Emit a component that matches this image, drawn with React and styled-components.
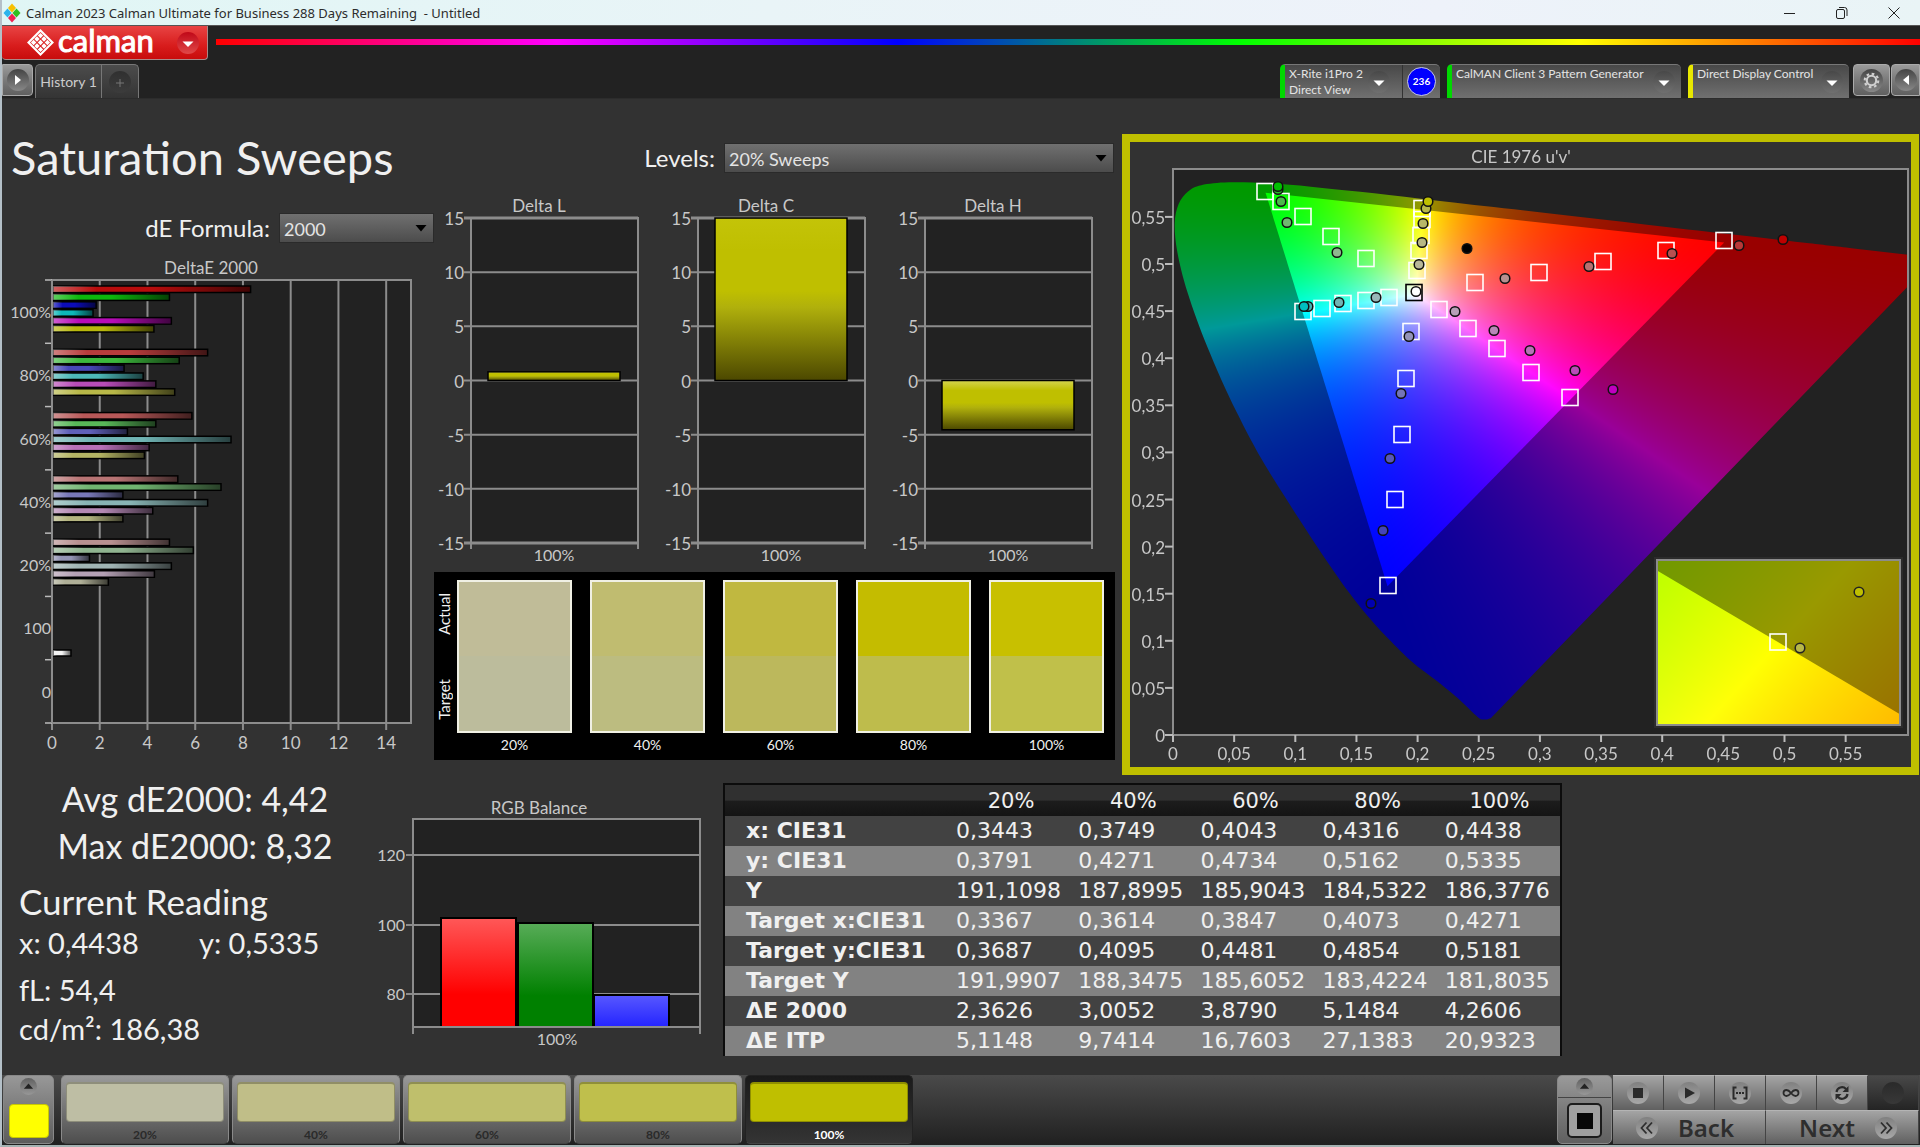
import React, { useEffect, useRef } from "react";
import styled, { createGlobalStyle, css } from "styled-components";

const UI = `Lato, "Open Sans", sans-serif`;
const SYSTEM = `"Noto Sans", "Open Sans", sans-serif`;

const GlobalStyle = createGlobalStyle`
  *, *::before, *::after { box-sizing: border-box; }
  body { margin: 0; background: #323232; font-family: ${UI}; color: #f0f0f0; }
  button, select { font-family: inherit; margin: 0; }
  h1, h2, p { margin: 0; font-weight: 400; }
  svg text { font-family: ${UI}; fill: #c8c8c8; }
`;

/* ---------- window frame ---------- */

const Shell = styled.div`
  min-height: 100vh;
  display: flex;
  flex-direction: column;
  border-left: 2px solid #b4c0c8;
  border-bottom: 2px solid #a4b2b2;
`;

const TitleBar = styled.div`
  height: 25px;
  display: flex;
  align-items: center;
  gap: 5px;
  padding-left: 1px;
  background: linear-gradient(90deg, #e0f6f5 0%, #e9f4f7 40%, #eef2fa 75%, #e9f4f6 100%);
  color: #2c2c2c;
  font: 13px/20px ${SYSTEM};
  white-space: pre;
`;

const WindowButtons = styled.div`
  margin-left: auto;
  display: flex;
`;

const WindowButton = styled.button`
  width: 52px;
  height: 25px;
  border: 0;
  padding: 0;
  background: none;
  display: grid;
  place-items: center;
`;

/* ---------- header ---------- */

const Header = styled.header`
  height: 74px;
  background: #222;
  border-top: 1px solid #555;
  border-bottom: 1px solid #2c2c2c;
  display: flex;
  flex-direction: column;
  justify-content: space-between;
`;

const BrandRow = styled.div`
  display: flex;
  align-items: flex-start;
  gap: 8px;
`;

const BrandButton = styled.button`
  width: 206px;
  height: 34px;
  padding: 0 8px 0 25px;
  display: flex;
  align-items: center;
  gap: 4px;
  border: 0;
  border-right: 1px solid #a88;
  border-bottom: 1px solid #a88;
  border-radius: 0 0 4px 4px;
  background: linear-gradient(#e84444, #d81c1c 60%, #c80c0c);
  color: #fff;
  font-size: 31px;
  svg:last-child { margin-left: auto; }
`;

const BrandName = styled.span`
  height: 34px;
  line-height: 28px;
  -webkit-text-stroke: 1px #fff;
`;

const Rainbow = styled.div`
  flex: 1;
  height: 6px;
  margin-top: 13px;
  background: linear-gradient(90deg, #f00, #f0f, #00f, #0f0, #ff0, #f00);
`;

const TabRow = styled.div`
  display: flex;
  align-items: flex-start;
  height: 34px;
`;

const metal = css`
  background: linear-gradient(#9a9a9a, #7a7a7a 50%, #606060);
  border: 1px solid #aaa;
`;

const EdgeButton = styled.button`
  ${metal}
  width: ${(p) => p.$w}px;
  height: 32px;
  padding: 0;
  display: grid;
  place-items: center;
  border-radius: ${(p) => p.$radius || "4px"};
`;

const HistoryTabs = styled.div`
  display: flex;
  margin-left: 2px;
  height: 34px;
  border: 1px solid #777;
  border-bottom: 0;
  border-radius: 5px 5px 0 0;
  background: linear-gradient(#4c4c4c, #343434);
`;

const Tab = styled.button`
  width: ${(p) => p.$w}px;
  padding: 0;
  border: 0;
  border-left: ${(p) => (p.$divided ? "1px solid #777" : "0")};
  background: none;
  color: #ccc;
  font-size: 14px;
  display: grid;
  place-items: center;
`;

const Devices = styled.div`
  margin-left: auto;
  display: flex;
  gap: 7px;
`;

const Device = styled.div`
  width: ${(p) => p.$w}px;
  height: 34px;
  display: flex;
  overflow: hidden;
  border-radius: 5px 5px 0 0;
  border-top: 1px solid #777;
  border-left: 5px solid ${(p) => p.$accent};
  background: linear-gradient(#484848, #707070);
`;

const DeviceMenu = styled.button`
  flex: 1;
  display: flex;
  justify-content: space-between;
  align-items: flex-start;
  padding: 1px ${(p) => p.$right || 6}px 0 4px;
  border: 0;
  background: none;
  color: #e4e4e4;
  font-size: 12px;
  line-height: 16px;
  text-align: left;
  white-space: nowrap;
  svg { margin-top: 5px; flex: none; }
`;

const Counter = styled.div`
  width: 38px;
  border-left: 1px solid #333;
  display: grid;
  place-items: center;
  span {
    width: 29px;
    height: 29px;
    border-radius: 50%;
    border: 1px solid #ccd;
    background: #00f;
    color: #fff;
    font: bold 10px/27px ${UI};
    text-align: center;
  }
`;

const EdgeGroup = styled.div`
  display: flex;
  margin-left: 4px;
  gap: 1px;
`;

/* ---------- main panes ---------- */

const Main = styled.main`
  flex: 1;
  background: #323232;
`;

const UpperRow = styled.div`
  display: grid;
  grid-template-columns: minmax(0, 432fr) minmax(0, 688fr) minmax(0, 798fr);
`;

const LowerRow = styled.div`
  display: grid;
  grid-template-columns: minmax(0, 368fr) minmax(0, 353fr) minmax(0, 839fr) minmax(0, 358fr);
`;

const Column = styled.section`
  display: flex;
  flex-direction: column;
  padding-top: ${(p) => p.$top || 0}px;
  padding-right: ${(p) => p.$right || 0}px;
`;

const PageTitle = styled.h1`
  padding-left: 9px;
  font-size: 47px;
  line-height: 56px;
`;

const Field = styled.label`
  display: flex;
  justify-content: flex-end;
  align-items: center;
  gap: 9px;
  margin: ${(p) => p.$margin};
  font-size: 24px;
  line-height: 30px;
  white-space: nowrap;
`;

const SelectBox = styled.span`
  display: grid;
  width: ${(p) => p.$w};
  select, svg { grid-area: 1 / 1; }
  select {
    appearance: none;
    height: 30px;
    width: 100%;
    padding: 2px 4px 0;
    border: 1px solid #2a2a2a;
    border-radius: 0;
    background: linear-gradient(#707070, #4c4c4c);
    color: #e4e4e4;
    font-size: 18px;
  }
  svg { place-self: center end; margin-right: 7px; pointer-events: none; }
`;

const Chart = styled.svg`
  display: block;
  width: 100%;
  height: auto;
`;

const DeltaRow = styled.div`
  display: grid;
  grid-template-columns: repeat(3, minmax(0, 1fr));
  margin: 23px 0 6px;
`;

const SwatchPanel = styled.div`
  display: grid;
  grid-template-columns: 23px minmax(0, 1fr);
  height: 188px;
  padding: 8px 11px 0 0;
  background: #000;
`;

const SwatchSides = styled.div`
  display: grid;
  grid-template-rows: 68px 102px;
  justify-items: start;
  align-items: center;
  font-size: 15px;
  line-height: 20px;
  span { writing-mode: vertical-rl; transform: rotate(180deg); }
`;

const Swatches = styled.div`
  display: grid;
  grid-template-columns: repeat(5, minmax(0, 1fr));
  column-gap: 18px;
`;

const Swatch = styled.figure`
  margin: 0;
  text-align: center;
  font-size: 14px;
  line-height: 24px;
`;

const SwatchColor = styled.div`
  height: 153px;
  border: 2px solid #f0f0e4;
  background: linear-gradient(${(p) => p.$actual} 50%, ${(p) => p.$target} 50%);
`;

const CiePanel = styled.section`
  margin: 35px 1px 0 0;
  border: 8px solid #bfbf00;
  display: grid;
  > * { grid-area: 1 / 1; width: 100%; height: auto; display: block; }
`;

/* ---------- readings ---------- */

const Averages = styled.div`
  padding: 0 0 0 18px;
  text-align: center;
  font-size: 34px;
  line-height: 47px;
`;

const ReadingTitle = styled.h2`
  padding-left: 17px;
  margin-top: 10px;
  font-size: 35px;
  line-height: 44px;
`;

const ReadingLine = styled.p`
  display: flex;
  padding-left: 17px;
  margin-top: ${(p) => p.$gap || 0}px;
  font-size: 29px;
  line-height: 39px;
  span { min-width: 180px; }
`;

const TablePane = styled.div`
  padding-top: 8px;
`;

const Results = styled.table`
  width: 100%;
  table-layout: fixed;
  border-collapse: collapse;
  border: 2px solid #0c0c0c;
  border-bottom: 0;
  font-family: "DejaVu Sans", sans-serif;
  font-size: 22px;
  color: #f0f0f0;
  th, td { padding: 0; height: 30px; line-height: 28px; white-space: nowrap; }
  td { padding-left: 6px; }
  thead th { height: 32px; font-weight: 400; font-size: 21px; }
  thead tr { background: linear-gradient(#303030 50%, #1c1c1c 54%, #141414); }
  tbody th { padding-left: 21px; text-align: left; }
  tbody tr { background: #424242; }
  tbody tr:nth-child(even) { background: #828282; }
`;

/* ---------- bottom bar ---------- */

const BottomBar = styled.footer`
  display: flex;
  height: 70px;
  padding: 0 1px 1px 1px;
  background: linear-gradient(#4a4a4a, #202020);
`;

const ColorMenu = styled.button`
  ${metal}
  background: linear-gradient(#989898, #5c5c5c);
  border-color: #888;
  width: 51px;
  padding: 2px 0 5px;
  margin-right: 7px;
  border-radius: 5px;
  display: flex;
  flex-direction: column;
  justify-content: space-between;
  align-items: center;
`;

const CurrentColor = styled.span`
  width: 40px;
  height: 34px;
  border-radius: 4px;
  border: 1px solid #c8c800;
  background: #ff0;
`;

const Steps = styled.div`
  display: flex;
  gap: 3px;
`;

const Step = styled.button`
  width: 168px;
  padding: 6px 4px 0;
  border: 1px solid ${(p) => (p.$on ? "#222" : "#8a8a8a")};
  border-bottom-color: #444;
  border-radius: 5px;
  background: ${(p) => (p.$on ? "linear-gradient(#1a1a1a, #343434)" : "linear-gradient(#999, #4e4e4e)")};
  color: ${(p) => (p.$on ? "#fff" : "#2a2a2a")};
  font-size: 12px;
  font-weight: 700;
  line-height: 26px;
  span {
    display: block;
    height: 40px;
    border-radius: 4px;
    border: 1px solid rgba(0, 0, 0, 0.25);
    border-top-width: 2px;
    background: ${(p) => p.$color};
  }
`;

const Transport = styled.div`
  margin-left: auto;
  display: flex;
  gap: 1px;
`;

const PatternBox = styled.div`
  ${metal}
  border-color: #888;
  width: 55px;
  border-radius: 5px;
  overflow: hidden;
  display: grid;
  grid-template-rows: 21px 1fr;
`;

const PlainButton = styled.button`
  border: 0;
  border-top: ${(p) => (p.$line ? "1px solid #444" : "0")};
  padding: 0;
  background: none;
  display: grid;
  place-items: center;
`;

const PatternIcon = styled.span`
  width: 35px;
  height: 35px;
  border: 2px solid #1c1c1c;
  border-radius: 5px;
  background: #a0a0a0;
  display: grid;
  place-items: center;
  &::after { content: ""; width: 16px; height: 16px; background: #080808; }
`;

const Keys = styled.div`
  display: grid;
  grid-template-columns: repeat(6, 51px);
  grid-template-rows: 35px 34px;
`;

const Key = styled.button`
  grid-column: span ${(p) => p.$span || 1};
  padding: ${(p) => p.$pad || "0"};
  border: 0;
  border-top: 1px solid ${(p) => (p.$off ? "#444" : "#b4b4b4")};
  border-right: 1px solid #444;
  background: ${(p) => (p.$off ? "linear-gradient(#484848, #242424)" : "linear-gradient(#a4a4a4, #606060)")};
  color: #2e2e2e;
  font-family: ${SYSTEM};
  font-size: 24px;
  font-weight: 600;
  line-height: 30px;
  display: flex;
  align-items: center;
  justify-content: center;
  gap: 20px;
`;

/* ---------- icons ---------- */

const AppIcon = () => (
  <svg width="18" height="20" viewBox="0 0 18 20" aria-hidden="true">
    <path d="M9 0.500 13 5 9 9.500 5 5Z" fill="#f7c000" />
    <path d="M4.500 5.500 8.500 10 4.500 14.500 0.500 10Z" fill="#2cb4ec" />
    <path d="M13.500 5.500 17.500 10 13.500 14.500 9.500 10Z" fill="#30c020" />
    <path d="M9 10.500 13 15 9 19.500 5 15Z" fill="#f02050" />
  </svg>
);

const BrandMark = () => (
  <svg width="27" height="27" viewBox="0 0 27 27" fill="#fff" aria-hidden="true">
    <path d="M13.500 0 27 13.500 13.500 27 0 13.500Z M13.500 3 3 13.500 13.500 24 24 13.500Z" fillRule="evenodd" />
    {[[13.5, 6.6], [10, 10], [17, 10], [6.6, 13.5], [13.5, 13.5], [20.4, 13.5], [10, 17], [17, 17], [13.5, 20.4]].map(
      ([x, y]) => (
        <path key={`${x}-${y}`} d={`M${x} ${y - 2.7}l2.700 2.700-2.700 2.700-2.700-2.700Z`} />
      )
    )}
  </svg>
);

const Round = ({ children, size = 22, from = "#444", to = "#888" }) => {
  const id = `g${from.slice(1)}${to.slice(1)}`;
  return (
    <svg width={size} height={size} viewBox="0 0 22 22" aria-hidden="true">
      <defs>
        <linearGradient id={id} x2="0" y2="1">
          <stop stopColor={from} />
          <stop offset="1" stopColor={to} />
        </linearGradient>
      </defs>
      <circle cx="11" cy="11" r="11" fill={`url(#${id})`} />
      {children}
    </svg>
  );
};

const Caret = () => (
  <svg width="12" height="8" viewBox="0 0 12 8" aria-hidden="true">
    <path d="M0.500 1h11L6 7.500Z" fill="#000" />
  </svg>
);

const DownArrow = ({ from, to }) => (
  <Round from={from} to={to}>
    <path d="M5.500 9.500h11L11 15Z" fill="#fff" />
  </Round>
);

const Gear = () => (
  <Round size={23}>
    <circle cx="11" cy="11" r="4.500" fill="none" stroke="#d0d0d0" strokeWidth="2" />
    <circle cx="11" cy="11" r="6.500" fill="none" stroke="#d0d0d0" strokeWidth="2" strokeDasharray="2.550 2.550" />
  </Round>
);

/* ---------- data ---------- */

const BAR_GROUPS = [
  ["100%", [8.32, 4.92, 1.85, 1.72, 5.0, 4.27], ["#b80c0c", "#0cb80c", "#0c0cb8", "#0cb8b8", "#b80cb8", "#b8b80c"]],
  ["80%", [6.52, 5.33, 3.02, 3.82, 4.35, 5.14], ["#b83c3c", "#3cb83c", "#4848b8", "#4cb8b8", "#b84cb8", "#b8b848"]],
  ["60%", [5.86, 4.35, 3.16, 7.5, 4.07, 3.87], ["#b85858", "#58b858", "#6060b8", "#70b4b4", "#b870b8", "#b4b464"]],
  ["40%", [5.27, 7.08, 2.97, 6.52, 4.22, 2.97], ["#b87474", "#70b470", "#7878b8", "#88b4b4", "#b488b4", "#b4b480"]],
  ["20%", [4.92, 5.92, 1.57, 5.0, 4.29, 2.36], ["#b89090", "#90b490", "#9494b4", "#a0b4b4", "#b4a0b4", "#b0b098"]],
  ["100", [], []],
  ["0", [], []],
];

const SWATCHES = [
  ["20%", "#c0bc98", "#bcbc9c", "#bebea4"],
  ["40%", "#c0bc70", "#bcbc80", "#c0be88"],
  ["60%", "#c0b840", "#bcb85c", "#bfbf6c"],
  ["80%", "#c4bc00", "#bebc4c", "#bfbf4c"],
  ["100%", "#c8c000", "#c0c04a", "#bfbf00"],
];

const TABLE = [
  ["x: CIE31", "0,3443", "0,3749", "0,4043", "0,4316", "0,4438"],
  ["y: CIE31", "0,3791", "0,4271", "0,4734", "0,5162", "0,5335"],
  ["Y", "191,1098", "187,8995", "185,9043", "184,5322", "186,3776"],
  ["Target x:CIE31", "0,3367", "0,3614", "0,3847", "0,4073", "0,4271"],
  ["Target y:CIE31", "0,3687", "0,4095", "0,4481", "0,4854", "0,5181"],
  ["Target Y", "191,9907", "188,3475", "185,6052", "183,4224", "181,8035"],
  ["ΔE 2000", "2,3626", "3,0052", "3,8790", "5,1484", "4,2606"],
  ["ΔE ITP", "5,1148", "9,7414", "16,7603", "27,1383", "20,9323"],
];

/* ---------- charts ---------- */

const AXIS = "#8c8c8c";

const DeltaEChart = () => {
  const left = 50, right = 409, top = 25, bottom = 468;
  const x = (v) => left + v * 23.87;
  const band = (bottom - top) / 7;
  return (
    <Chart viewBox="0 0 432 510" role="img" aria-label="DeltaE 2000">
      <defs>
        <linearGradient id="sheen">
          <stop stopColor="#fff" stopOpacity="0.35" />
          <stop offset="0.22" stopColor="#fff" stopOpacity="0" />
          <stop offset="0.5" stopColor="#000" stopOpacity="0" />
          <stop offset="1" stopColor="#000" stopOpacity="0.65" />
        </linearGradient>
      </defs>
      <text x="209" y="19" fontSize="17" textAnchor="middle">DeltaE 2000</text>
      <rect x={left} y={top} width={right - left} height={bottom - top} fill="#222" stroke={AXIS} strokeWidth="2" />
      {[0, 2, 4, 6, 8, 10, 12, 14].map((v) => (
        <g key={v}>
          <line x1={x(v)} x2={x(v)} y1={top} y2={bottom + 7} stroke={AXIS} strokeWidth="2" />
          <text x={x(v)} y="494" fontSize="17" textAnchor="middle">{v}</text>
        </g>
      ))}
      {BAR_GROUPS.map(([label, values, colors], g) => (
        <g key={label}>
          <line x1={left - 7} x2={left} y1={top + g * band} y2={top + g * band} stroke="#bbb" strokeWidth="1.500" />
          <text x={left - 1} y={top + g * band + 38} fontSize="16" textAnchor="end">{label}</text>
          {values.map((v, i) => {
            const y = top + 6 + g * band + i * 7.9;
            return (
              <g key={i}>
                <rect x={left + 1} y={y} width={x(v) - left - 1} height="6.500" fill={colors[i]} stroke="#000" strokeWidth="1.500" />
                <rect x={left + 1} y={y} width={x(v) - left - 1} height="6" fill="url(#sheen)" />
              </g>
            );
          })}
        </g>
      ))}
      <line x1={left - 7} x2={left} y1={bottom} y2={bottom} stroke="#bbb" strokeWidth="1.500" />
      <rect x={left + 1} y="395" width="18" height="6" fill="#f4f4f4" stroke="#000" strokeWidth="1.500" />
      <rect x={left + 1} y="395" width="18" height="6" fill="url(#sheen)" />
      <line x1={left} x2={left} y1={top} y2={bottom} stroke={AXIS} strokeWidth="2" />
    </Chart>
  );
};

const DeltaChart = ({ title, from, to }) => {
  const y = (v) => 184.5 - v * 10.83;
  const top = Math.min(y(from), y(to));
  const height = Math.abs(y(from) - y(to));
  const id = `bar-${title.slice(-1)}`;
  return (
    <Chart viewBox="0 0 227 370" role="img" aria-label={title}>
      <defs>
        <linearGradient id={id} x2="0" y2="1">
          <stop stopColor={title === "Delta C" ? "#c4c408" : "#d4d450"} />
          <stop offset="0.2" stopColor="#bfbf00" />
          <stop offset="0.45" stopColor="#bfbf00" />
          <stop offset="0.55" stopColor="#b0b00c" />
          <stop offset="1" stopColor="#4c4800" />
        </linearGradient>
      </defs>
      <text x="105" y="16" fontSize="17" textAnchor="middle">{title}</text>
      <rect x="37" y="22" width="167" height="325" fill="#222" />
      {[15, 10, 5, 0, -5, -10, -15].map((v) => (
        <g key={v}>
          <line x1="30" x2="204" y1={y(v)} y2={y(v)} stroke={AXIS} strokeWidth={Math.abs(v) === 15 ? 3 : 2} />
          <text x="30" y={y(v) + 7} fontSize="17" textAnchor="end">{v}</text>
        </g>
      ))}
      <path d="M37 21V353M204 21V353" stroke={AXIS} strokeWidth="2" />
      <rect x="54" y={top} width="132" height={height} fill={`url(#${id})`} stroke="#000" strokeWidth="1.500" />
      <text x="120" y="365" fontSize="16" textAnchor="middle">100%</text>
    </Chart>
  );
};

const RgbChart = () => (
  <Chart viewBox="0 0 353 260" role="img" aria-label="RGB Balance">
    <defs>
      {[["r", "#ff5858", "#f00"], ["g", "#58ac58", "#008000"], ["b", "#5858ff", "#2424ff"]].map(([id, a, b]) => (
        <linearGradient key={id} id={`rgb-${id}`} x2="0" y2="1">
          <stop stopColor={a} />
          <stop offset={id === "b" ? 1 : 0.7} stopColor={b} />
        </linearGradient>
      ))}
    </defs>
    <text x="169" y="19" fontSize="17" textAnchor="middle">RGB Balance</text>
    <rect x="43" y="24" width="287" height="208" fill="#222" stroke={AXIS} strokeWidth="2" />
    {[[120, 60], [100, 130], [80, 199]].map(([v, y]) => (
      <g key={v}>
        <line x1="36" x2="330" y1={y} y2={y} stroke={AXIS} strokeWidth="2" />
        <text x="35" y={y + 6} fontSize="16" textAnchor="end">{v}</text>
      </g>
    ))}
    {[["r", 71, 123], ["g", 148, 128], ["b", 224, 200]].map(([id, x, y]) => (
      <rect key={id} x={x} y={y} width="75" height={232 - y} fill={`url(#rgb-${id})`} stroke="#000" strokeWidth="2" />
    ))}
    <path d="M43 232H330M43 232V239M330 232V239" stroke={AXIS} strokeWidth="2" />
    <text x="187" y="250" fontSize="16" textAnchor="middle">100%</text>
  </Chart>
);

/* CIE diagram: pixel size of the drawing and the mapping from u'v' to it */
const W = 781, H = 625;
const PX = 43, PR = 778, PY = 27, PB = 593;
const toX = (u) => PX + u * 1223;
const toY = (v) => PB - v * 942;

const LOCUS = [
  [0.2568, 0.0165], [0.2522, 0.0165], [0.2461, 0.0226], [0.2347, 0.0370], [0.2161, 0.0570], [0.1877, 0.0871],
  [0.1441, 0.1510], [0.0828, 0.2708], [0.0521, 0.3427], [0.0282, 0.4117], [0.0119, 0.4698], [0.0035, 0.5131],
  [0.0014, 0.5432], [0.0046, 0.5638], [0.0123, 0.5770], [0.0231, 0.5837], [0.0458, 0.5868], [0.0792, 0.5857],
  [0.1127, 0.5821], [0.1531, 0.5766], [0.2026, 0.5694], [0.2623, 0.5604], [0.3315, 0.5501], [0.4035, 0.5393],
  [0.4691, 0.5296], [0.5202, 0.5219], [0.5565, 0.5165], [0.6234, 0.5065], [0.2600, 0.0180],
];
const GAMUT = [[0.4507, 0.5229], [0.0757, 0.5757], [0.1754, 0.1579]];

/* Adobe RGB colour of a chromaticity, scaled so its largest channel is full */
const chroma = (x, y, level) => {
  const X = x / y, Z = (1 - x - y) / y;
  const rgb = [
    2.04159 * X - 0.56501 - 0.34473 * Z,
    -0.96924 * X + 1.87597 + 0.04156 * Z,
    0.01344 * X - 0.11836 + 1.01517 * Z,
  ].map((c) => Math.max(0, c));
  const max = Math.max(...rgb);
  return rgb.map((c) => 255 * level * Math.pow(c / max, 1.25));
};

const paintField = (w, h, toXy, level) => {
  const c = document.createElement("canvas");
  c.width = w;
  c.height = h;
  const g = c.getContext("2d");
  const img = g.createImageData(w, h);
  for (let j = 0; j < h; j++) {
    for (let i = 0; i < w; i++) {
      const [x, y] = toXy(i, j);
      const [r, gr, b] = chroma(x, Math.max(y, 0.001), level);
      const k = (j * w + i) * 4;
      img.data[k] = r;
      img.data[k + 1] = gr;
      img.data[k + 2] = b;
      img.data[k + 3] = 255;
    }
  }
  g.putImageData(img, 0, 0);
  return c;
};

const fillShape = (g, points, smooth, image, x, y) => {
  g.save();
  g.beginPath();
  g.moveTo(...points[0]);
  for (let i = 1; i < points.length; i++) {
    if (smooth && i < points.length - 2 && i > 1) {
      const [p0, p1, p2, p3] = [points[i - 2], points[i - 1], points[i], points[i + 1]];
      g.bezierCurveTo(
        p1[0] + (p2[0] - p0[0]) / 6, p1[1] + (p2[1] - p0[1]) / 6,
        p2[0] - (p3[0] - p1[0]) / 6, p2[1] - (p3[1] - p1[1]) / 6,
        p2[0], p2[1]
      );
    } else g.lineTo(...points[i]);
  }
  g.closePath();
  g.clip();
  g.drawImage(image, x, y);
  g.restore();
};

const INSET = { x: 527, y: 418, w: 243, h: 165 };

const paintCie = (canvas) => {
  const g = canvas.getContext("2d");
  g.fillStyle = "#323232";
  g.fillRect(0, 0, W, H);
  g.fillStyle = "#222";
  g.fillRect(PX, PY, PR - PX, PB - PY);
  const uvToXy = (i, j) => {
    const u = (i - PX) / 1223, v = (PB - j) / 942;
    const d = 6 * u - 16 * v + 12;
    return [(9 * u) / d, (4 * v) / d];
  };
  g.save();
  g.beginPath();
  g.rect(PX, PY, PR - PX, PB - PY);
  g.clip();
  const px = ([u, v]) => [toX(u), toY(v)];
  fillShape(g, LOCUS.map(px), true, paintField(W, H, uvToXy, 0.6), 0, 0);
  fillShape(g, GAMUT.map(px), false, paintField(W, H, uvToXy, 1), 0, 0);
  g.restore();

  const { x, y, w, h } = INSET;
  g.fillStyle = "#2c2c2c";
  g.fillRect(x - 3, y - 3, w + 6, h + 6);
  const xy = (i, j) => [0.4271 + (i - w / 2) / 4843, 0.5181 - (j - h / 2) / 3240];
  g.drawImage(paintField(w, h, xy, 0.6), x, y);
  const edge = (cx) => y + h / 2 + (0.5181 - (0.71 - (cx - 0.21) * 0.8837)) * 3240;
  fillShape(
    g,
    [[x, edge(0.4271 - w / 2 / 4843)], [x + w, edge(0.4271 + w / 2 / 4843)], [x + w, y + h], [x, y + h]],
    false, paintField(w, h, xy, 1), x, y
  );
};

const TARGETS = [
  [135, 49], [151, 59], [173, 74], [201, 94], [236, 116],
  [292, 66], [292, 77], [291, 93], [289, 108], [287, 128],
  [259, 155], [236, 158], [213, 161], [192, 166], [173, 169],
  [281, 189], [276, 236], [272, 292], [265, 357], [258, 443],
  [309, 167], [338, 186], [367, 206], [401, 230], [440, 255],
  [345, 140], [409, 130], [473, 119], [536, 108], [594, 98],
];

const MEASURED = [
  [207, 110, "#8fb88f"], [157, 80, "#70b870"], [151, 59, "#4cb84c"], [148, 47, "#2cb82c"], [148, 44, "#00bf00"],
  [289, 122, "#b8b898"], [292, 100, "#b8b884"], [293, 81, "#b8b868"], [296, 66, "#b8b848"], [298, 59, "#bfbf00"],
  [246, 155, "#98b8b8"], [209, 160, "#70b4b4"], [178, 164, "#48b4b4"], [174, 164, "#00bfbf"],
  [279, 194, "#9494b8"], [271, 251, "#7474b8"], [260, 316, "#5858b8"], [253, 388, "#4444b8"], [241, 461, "#0000b0"],
  [325, 169, "#b8a0b8"], [364, 188, "#b888b8"], [400, 208, "#b870b8"], [445, 228, "#b84cb8"], [483, 247, "#bf00bf"],
  [375, 136, "#b89090"], [459, 124, "#b87070"], [542, 111, "#b85050"], [609, 103, "#b83838"], [653, 97, "#bf0000"],
  [286, 149, "#ffffff"], [337, 106, "#000000"],
];

const num = (v) => String(v).replace(".", ",");

const CieDiagram = () => {
  const ref = useRef(null);
  useEffect(() => paintCie(ref.current), []);
  const ticks = Array.from({ length: 12 }, (_, i) => Math.round(i * 5) / 100);
  return (
    <CiePanel>
      <canvas ref={ref} width={W} height={H} />
      <svg viewBox={`0 0 ${W} ${H}`} role="img" aria-label="CIE 1976 u'v'">
        <text x="391" y="21" fontSize="17" textAnchor="middle">CIE 1976 u'v'</text>
        <rect x={PX} y={PY} width={PR - PX} height={PB - PY} fill="none" stroke={AXIS} strokeWidth="2" />
        {ticks.map((t) => (
          <g key={t}>
            <line x1={toX(t)} x2={toX(t)} y1={PB} y2={PB + 7} stroke="#bbb" strokeWidth="2" />
            <line x1={PX - 8} x2={PX} y1={toY(t)} y2={toY(t)} stroke="#bbb" strokeWidth="2" />
            <text x={toX(t)} y="618" fontSize="17" textAnchor="middle">{num(t)}</text>
            <text x={PX - 8} y={toY(t) + 7} fontSize="17" textAnchor="end">{num(t)}</text>
          </g>
        ))}
        {TARGETS.map(([x, y], i) => (
          <rect key={i} x={x - 8} y={y - 7.5} width="16" height="16" fill="none" stroke="#fff" strokeWidth="1.600" />
        ))}
        <rect x="276" y="142.500" width="16" height="16" fill="none" stroke="#000" strokeWidth="1.600" />
        {MEASURED.map(([x, y, c], i) => (
          <circle key={i} cx={x} cy={y + 0.5} r="4.800" fill={c} stroke="#111" strokeWidth="1.500" />
        ))}
        <rect x={INSET.x} y={INSET.y} width={INSET.w} height={INSET.h} fill="none" stroke={AXIS} strokeWidth="2" />
        <rect x="640" y="492" width="16" height="16" fill="none" stroke="#fff" strokeWidth="1.600" />
        <circle cx="670" cy="506" r="4.800" fill="#b8b848" stroke="#222" strokeWidth="1.500" />
        <circle cx="729" cy="450" r="4.800" fill="#bfbf00" stroke="#222" strokeWidth="1.500" />
      </svg>
    </CiePanel>
  );
};

/* ---------- page ---------- */

const Picker = ({ id, label, value, width, margin }) => (
  <Field htmlFor={id} $margin={margin}>
    {label}
    <SelectBox $w={width}>
      <select id={id} defaultValue={value}>
        <option>{value}</option>
      </select>
      <Caret />
    </SelectBox>
  </Field>
);

const keyTone = { from: "#808080", to: "#a8a8a8" };

export default function App() {
  return (
    <Shell>
      <GlobalStyle />
      <TitleBar>
        <AppIcon />
        <span>{"Calman 2023 Calman Ultimate for Business 288 Days Remaining  - Untitled"}</span>
        <WindowButtons>
          <WindowButton aria-label="Minimize">
            <svg width="12" height="12"><path d="M0 6.500h11" stroke="#222" /></svg>
          </WindowButton>
          <WindowButton aria-label="Restore">
            <svg width="12" height="12" fill="none" stroke="#222">
              <rect x="0.500" y="2.500" width="8" height="9" rx="1.500" />
              <path d="M3 0.500h5.500a2.500 2.500 0 0 1 2.500 2.500V9" />
            </svg>
          </WindowButton>
          <WindowButton aria-label="Close">
            <svg width="12" height="12"><path d="M0.500 0.500l11 11M11.500 0.500l-11 11" stroke="#222" /></svg>
          </WindowButton>
        </WindowButtons>
      </TitleBar>

      <Header>
        <BrandRow>
          <BrandButton>
            <BrandMark />
            <BrandName>calman</BrandName>
            <DownArrow from="#c00818" to="#e04848" />
          </BrandButton>
          <Rainbow />
        </BrandRow>
        <TabRow>
          <EdgeButton $w={31} $radius="0 4px 4px 0" aria-label="Expand">
            <Round><path d="M8 6v10l6-5Z" fill="#fff" /></Round>
          </EdgeButton>
          <HistoryTabs>
            <Tab $w={65}>History 1</Tab>
            <Tab $w={37} $divided aria-label="Add tab">
              <Round from="#303030" to="#3c3c3c"><path d="M7 12h8M11 8v8" stroke="#777" /></Round>
            </Tab>
          </HistoryTabs>
          <Devices>
            <Device $w={160} $accent="#00d800">
              <DeviceMenu $right={12}>
                <span>X-Rite i1Pro 2<br />Direct View</span>
                <DownArrow from="#484848" to="#707070" />
              </DeviceMenu>
              <Counter><span>236</span></Counter>
            </Device>
            <Device $w={234} $accent="#00d800">
              <DeviceMenu>
                <span>CalMAN Client 3 Pattern Generator</span>
                <DownArrow from="#484848" to="#707070" />
              </DeviceMenu>
            </Device>
            <Device $w={161} $accent="#e8e800">
              <DeviceMenu>
                <span>Direct Display Control</span>
                <DownArrow from="#484848" to="#707070" />
              </DeviceMenu>
            </Device>
          </Devices>
          <EdgeGroup>
            <EdgeButton $w={37} aria-label="Settings"><Gear /></EdgeButton>
            <EdgeButton $w={29} $radius="4px 0 0 4px" aria-label="Collapse">
              <Round><path d="M14 6v10l-6-5Z" fill="#fff" /></Round>
            </EdgeButton>
          </EdgeGroup>
        </TabRow>
      </Header>

      <Main>
        <UpperRow>
          <Column $top={30}>
            <PageTitle>Saturation Sweeps</PageTitle>
            <Picker id="formula" label="dE Formula:" value="2000" width="155px" margin="28px 0 12px" />
            <DeltaEChart />
          </Column>
          <Column $top={44} $right={7}>
            <Picker id="levels" label="Levels:" value="20% Sweeps" width="390px" margin="0 1px 0 0" />
            <DeltaRow>
              <DeltaChart title="Delta L" from={0} to={0.8} />
              <DeltaChart title="Delta C" from={0} to={15} />
              <DeltaChart title="Delta H" from={0} to={-4.55} />
            </DeltaRow>
            <SwatchPanel>
              <SwatchSides>
                <span>Actual</span>
                <span>Target</span>
              </SwatchSides>
              <Swatches>
                {SWATCHES.map(([label, actual, target]) => (
                  <Swatch key={label}>
                    <SwatchColor $actual={actual} $target={target} />
                    <figcaption>{label}</figcaption>
                  </Swatch>
                ))}
              </Swatches>
            </SwatchPanel>
          </Column>
          <CieDiagram />
        </UpperRow>

        <LowerRow>
          <Column>
            <Averages>
              <div>Avg dE2000: 4,42</div>
              <div>Max dE2000: 8,32</div>
            </Averages>
            <ReadingTitle>Current Reading</ReadingTitle>
            <ReadingLine><span>x: 0,4438</span><span>y: 0,5335</span></ReadingLine>
            <ReadingLine $gap={8}>fL: 54,4</ReadingLine>
            <ReadingLine>cd/m²: 186,38</ReadingLine>
          </Column>
          <Column $top={20}>
            <RgbChart />
          </Column>
          <TablePane>
            <Results>
              <colgroup>
                <col style={{ width: "27%" }} />
                <col span="5" />
              </colgroup>
              <thead>
                <tr>
                  <td />
                  {SWATCHES.map(([label]) => <th key={label} scope="col">{label}</th>)}
                </tr>
              </thead>
              <tbody>
                {TABLE.map(([label, ...cells]) => (
                  <tr key={label}>
                    <th scope="row">{label}</th>
                    {cells.map((c) => <td key={c}>{c}</td>)}
                  </tr>
                ))}
              </tbody>
            </Results>
          </TablePane>
        </LowerRow>
      </Main>

      <BottomBar>
        <ColorMenu aria-label="Color">
          <Round size={17} from="#606060" to="#989898"><path d="M5 14h12L11 7Z" fill="#222" /></Round>
          <CurrentColor />
        </ColorMenu>
        <Steps>
          {SWATCHES.map(([label, , , color], i) => (
            <Step key={label} $color={color} $on={i === 4}>
              <span />
              {label}
            </Step>
          ))}
        </Steps>
        <Transport>
          <PatternBox>
            <PlainButton aria-label="Open pattern menu">
              <Round size={17} from="#606060" to="#989898"><path d="M5 14h12L11 7Z" fill="#222" /></Round>
            </PlainButton>
            <PlainButton $line aria-label="Pattern"><PatternIcon /></PlainButton>
          </PatternBox>
          <Keys>
            <Key aria-label="Stop"><Round {...keyTone}><rect x="6" y="6" width="10" height="10" fill="#2a2a2a" /></Round></Key>
            <Key aria-label="Play"><Round {...keyTone}><path d="M7 5.500v11l10-5.500Z" fill="#2a2a2a" /></Round></Key>
            <Key aria-label="Read series">
              <Round {...keyTone}>
                <path d="M7.500 5.500H4.500v11h3M14.500 5.500h3v11h-3" fill="none" stroke="#2a2a2a" strokeWidth="2" />
                <path d="M7 11h8" stroke="#2a2a2a" strokeWidth="2" strokeDasharray="2 1" />
              </Round>
            </Key>
            <Key aria-label="Read continuously">
              <Round {...keyTone}>
                <path d="M11 11C9 8.500 7.800 8 6.500 8a3 3 0 0 0 0 6c1.300 0 2.500-.5 4.500-3s3.200-3 4.500-3a3 3 0 0 1 0 6c-1.300 0-2.500-.5-4.500-3Z" fill="none" stroke="#2a2a2a" strokeWidth="1.800" />
              </Round>
            </Key>
            <Key aria-label="Refresh">
              <Round {...keyTone}>
                <path d="M5.500 10A5.500 5.500 0 0 1 15 7M16.500 12A5.500 5.500 0 0 1 7 15" fill="none" stroke="#2a2a2a" strokeWidth="2.200" />
                <path d="M17.500 4v6h-6ZM4.500 18v-6h6Z" fill="#2a2a2a" />
              </Round>
            </Key>
            <Key $off aria-label="Record"><Round from="#2a2a2a" to="#383838" /></Key>
            <Key $span={3} $pad="0 8px 0 0">
              <Round {...keyTone}><path d="M10.500 5.500 5.500 11l5 5.500M16 5.500 11 11l5 5.500" fill="none" stroke="#2e2e2e" strokeWidth="1.800" /></Round>
              Back
            </Key>
            <Key $span={3} $pad="0 0 0 12px">
              Next
              <Round {...keyTone}><path d="M6 5.500 11 11l-5 5.500M11.500 5.500 16.500 11l-5 5.500" fill="none" stroke="#2e2e2e" strokeWidth="1.800" /></Round>
            </Key>
          </Keys>
        </Transport>
      </BottomBar>
    </Shell>
  );
}
